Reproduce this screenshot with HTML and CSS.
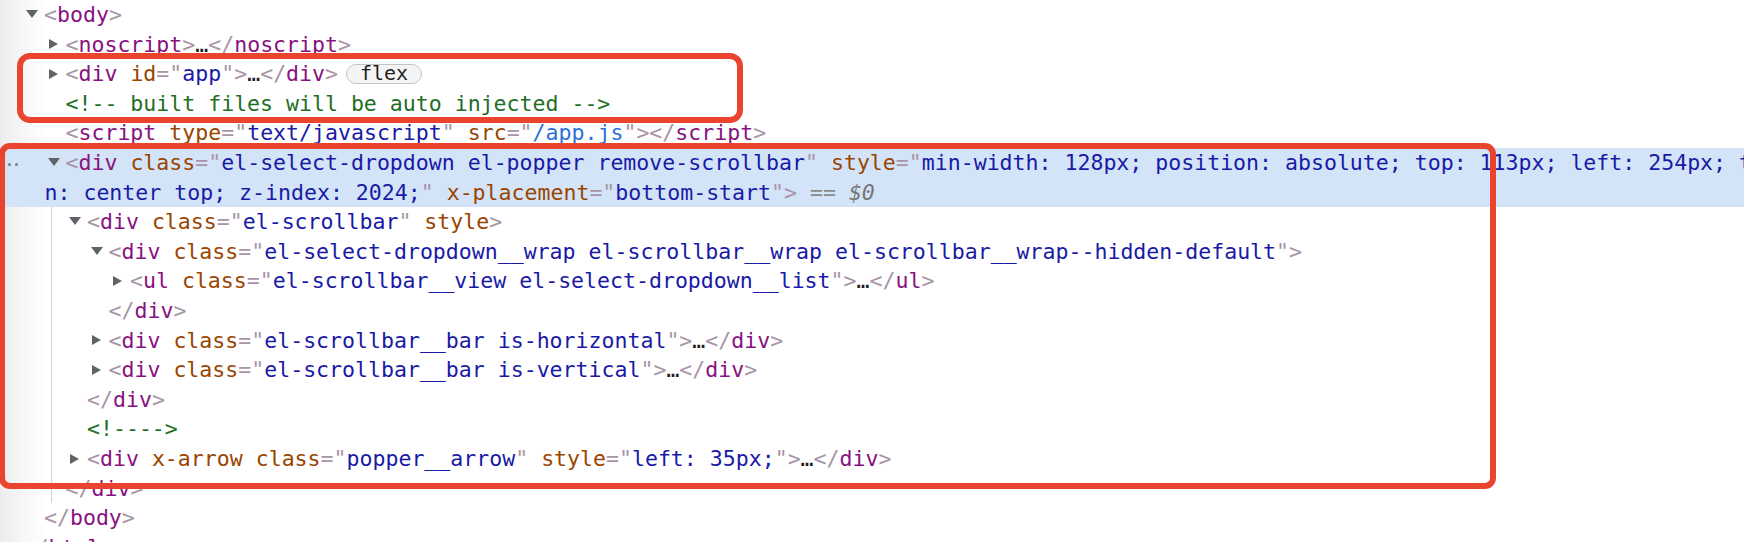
FILE: index.html
```html
<!DOCTYPE html>
<html lang="en">
<head>
    <meta charset="UTF-8">
    <meta name="viewport" content="width=device-width, initial-scale=1.0">
    <title>Elements</title>
    <link rel="stylesheet" href="styles.css">
</head>
<body>
    <div class="tree">
        <div class="row l0"><span class="tw open"></span><span class="code"><span class="b">&lt;</span><span class="t">body</span><span class="b">&gt;</span></span></div>
        <div class="row l1"><span class="tw closed"></span><span class="code"><span class="b">&lt;</span><span class="t">noscript</span><span class="b">&gt;</span>…<span class="b">&lt;/</span><span class="t">noscript</span><span class="b">&gt;</span></span></div>
        <div class="row l1"><span class="tw closed"></span><span class="code"><span class="b">&lt;</span><span class="t">div</span> <span class="an">id</span><span class="b">="</span><span class="av">app</span><span class="b">"&gt;</span>…<span class="b">&lt;/</span><span class="t">div</span><span class="b">&gt;</span></span><span class="badge">flex</span></div>
        <div class="row l1"><span class="tw"></span><span class="code cm">&lt;!-- built files will be auto injected --&gt;</span></div>
        <div class="row l1"><span class="tw"></span><span class="code"><span class="b">&lt;</span><span class="t">script</span> <span class="an">type</span><span class="b">="</span><span class="av">text/javascript</span><span class="b">"</span> <span class="an">src</span><span class="b">="</span><span class="lk">/app.js</span><span class="b">"&gt;&lt;/</span><span class="t">script</span><span class="b">&gt;</span></span></div>

        <div class="selected">
            <span class="more"><i></i><i></i></span>
            <div class="row l1"><span class="tw open"></span><span class="code"><span class="b">&lt;</span><span class="t">div</span> <span class="an">class</span><span class="b">="</span><span class="av">el-select-dropdown el-popper remove-scrollbar</span><span class="b">"</span> <span class="an">style</span><span class="b">="</span><span class="av">min-width: 128px; position: absolute; top: 113px; left: 254px; transform-origi</span></span></div>
            <div class="row wrap"><span class="code"><span class="av">n: center top; z-index: 2024;</span><span class="b">"</span> <span class="an">x-placement</span><span class="b">="</span><span class="av">bottom-start</span><span class="b">"&gt;</span> <span class="eq">==</span> <span class="dollar">$0</span></span></div>
        </div>

        <div class="children">
            <div class="row l2"><span class="tw open"></span><span class="code"><span class="b">&lt;</span><span class="t">div</span> <span class="an">class</span><span class="b">="</span><span class="av">el-scrollbar</span><span class="b">"</span> <span class="an">style</span><span class="b">&gt;</span></span></div>
            <div class="row l3"><span class="tw open"></span><span class="code"><span class="b">&lt;</span><span class="t">div</span> <span class="an">class</span><span class="b">="</span><span class="av">el-select-dropdown__wrap el-scrollbar__wrap el-scrollbar__wrap--hidden-default</span><span class="b">"&gt;</span></span></div>
            <div class="row l4"><span class="tw closed"></span><span class="code"><span class="b">&lt;</span><span class="t">ul</span> <span class="an">class</span><span class="b">="</span><span class="av">el-scrollbar__view el-select-dropdown__list</span><span class="b">"&gt;</span>…<span class="b">&lt;/</span><span class="t">ul</span><span class="b">&gt;</span></span></div>
            <div class="row l3"><span class="tw"></span><span class="code"><span class="b">&lt;/</span><span class="t">div</span><span class="b">&gt;</span></span></div>
            <div class="row l3"><span class="tw closed"></span><span class="code"><span class="b">&lt;</span><span class="t">div</span> <span class="an">class</span><span class="b">="</span><span class="av">el-scrollbar__bar is-horizontal</span><span class="b">"&gt;</span>…<span class="b">&lt;/</span><span class="t">div</span><span class="b">&gt;</span></span></div>
            <div class="row l3"><span class="tw closed"></span><span class="code"><span class="b">&lt;</span><span class="t">div</span> <span class="an">class</span><span class="b">="</span><span class="av">el-scrollbar__bar is-vertical</span><span class="b">"&gt;</span>…<span class="b">&lt;/</span><span class="t">div</span><span class="b">&gt;</span></span></div>
            <div class="row l2"><span class="tw"></span><span class="code"><span class="b">&lt;/</span><span class="t">div</span><span class="b">&gt;</span></span></div>
            <div class="row l2"><span class="tw"></span><span class="code cm">&lt;!----&gt;</span></div>
            <div class="row l2"><span class="tw closed"></span><span class="code"><span class="b">&lt;</span><span class="t">div</span> <span class="an">x-arrow</span> <span class="an">class</span><span class="b">="</span><span class="av">popper__arrow</span><span class="b">"</span> <span class="an">style</span><span class="b">="</span><span class="av">left: 35px;</span><span class="b">"&gt;</span>…<span class="b">&lt;/</span><span class="t">div</span><span class="b">&gt;</span></span></div>
            <div class="row l1"><span class="tw"></span><span class="code"><span class="b">&lt;/</span><span class="t">div</span><span class="b">&gt;</span></span></div>
        </div>

        <div class="row l0"><span class="tw"></span><span class="code"><span class="b">&lt;/</span><span class="t">body</span><span class="b">&gt;</span></span></div>
        <div class="row lroot"><span class="tw"></span><span class="code"><span class="b">&lt;/</span><span class="t">html</span><span class="b">&gt;</span></span></div>
    </div>

    <!-- annotation boxes drawn over the tree -->
    <div class="mark mark-app"></div>
    <div class="mark mark-popper"></div>
</body>
</html>
```

FILE: styles.css
```css
body {
    margin: 0;
    height: 542px;
    overflow: hidden;
    position: relative;
    background: linear-gradient(to right, #ececec 0, #f8f8f8 26px, #fff 46px);
    font-family: "DejaVu Sans Mono", "Liberation Mono", monospace;
    font-size: 21.55px;
    color: #1f1f1f;
}
.row {
    display: flex;
    align-items: center;
    height: 29.6px;
    line-height: 29.6px;
    white-space: pre;
}
.code {
    flex: none;
}
.lroot { padding-left: 4.5px; }
.l0 { padding-left: 26px; }
.l1 { padding-left: 47.5px; }
.l2 { padding-left: 69px; }
.l3 { padding-left: 90.5px; }
.l4 { padding-left: 112px; }
.wrap { padding-left: 44.5px; }

/* expand / collapse triangles */
.tw {
    flex: none;
    width: 18px;
    height: 100%;
    display: flex;
    align-items: center;
}
.tw.open::before {
    content: "";
    border-left: 6px solid transparent;
    border-right: 6px solid transparent;
    border-top: 8px solid #5f6368;
    margin-top: -2px;
}
.tw.closed::before {
    content: "";
    border-top: 5.5px solid transparent;
    border-bottom: 5.5px solid transparent;
    border-left: 9px solid #5f6368;
    margin-left: 1px;
}

/* syntax colours */
.b { color: #a894a6; }
.t { color: #881280; }
.an { color: #994500; }
.av { color: #1a1aa6; }
.cm { color: #236e25; }
.lk {
    color: #2e6fd8;
    text-decoration: underline;
    text-underline-offset: 3px;
}
.eq { color: #8a8a8a; }
.dollar {
    color: #767676;
    font-style: italic;
}

.badge {
    flex: none;
    margin-left: 8px;
    width: 76px;
    height: 20px;
    box-sizing: border-box;
    border: 1.5px solid #c4c4c4;
    border-radius: 10px;
    background: #f4f4f4;
    font-size: 20px;
    line-height: 16px;
    text-align: center;
    color: #1f1f1f;
}

.selected {
    position: relative;
    background: #d3e4f8;
}
.more {
    position: absolute;
    left: 8px;
    top: 15px;
    display: flex;
    gap: 4px;
}
.more i {
    width: 3px;
    height: 3px;
    border-radius: 50%;
    background: #7c7c7c;
}

.children {
    background: linear-gradient(#c5d2ea, #c5d2ea) 51px 0 / 1px 100% no-repeat;
}

.mark {
    position: absolute;
    box-sizing: border-box;
    border: 6px solid #e9442e;
}
.mark-app {
    left: 17px;
    top: 53px;
    width: 726px;
    height: 70px;
    border-radius: 13px;
}
.mark-popper {
    left: -1px;
    top: 143px;
    width: 1497px;
    height: 346px;
    border-radius: 11px;
}
```
